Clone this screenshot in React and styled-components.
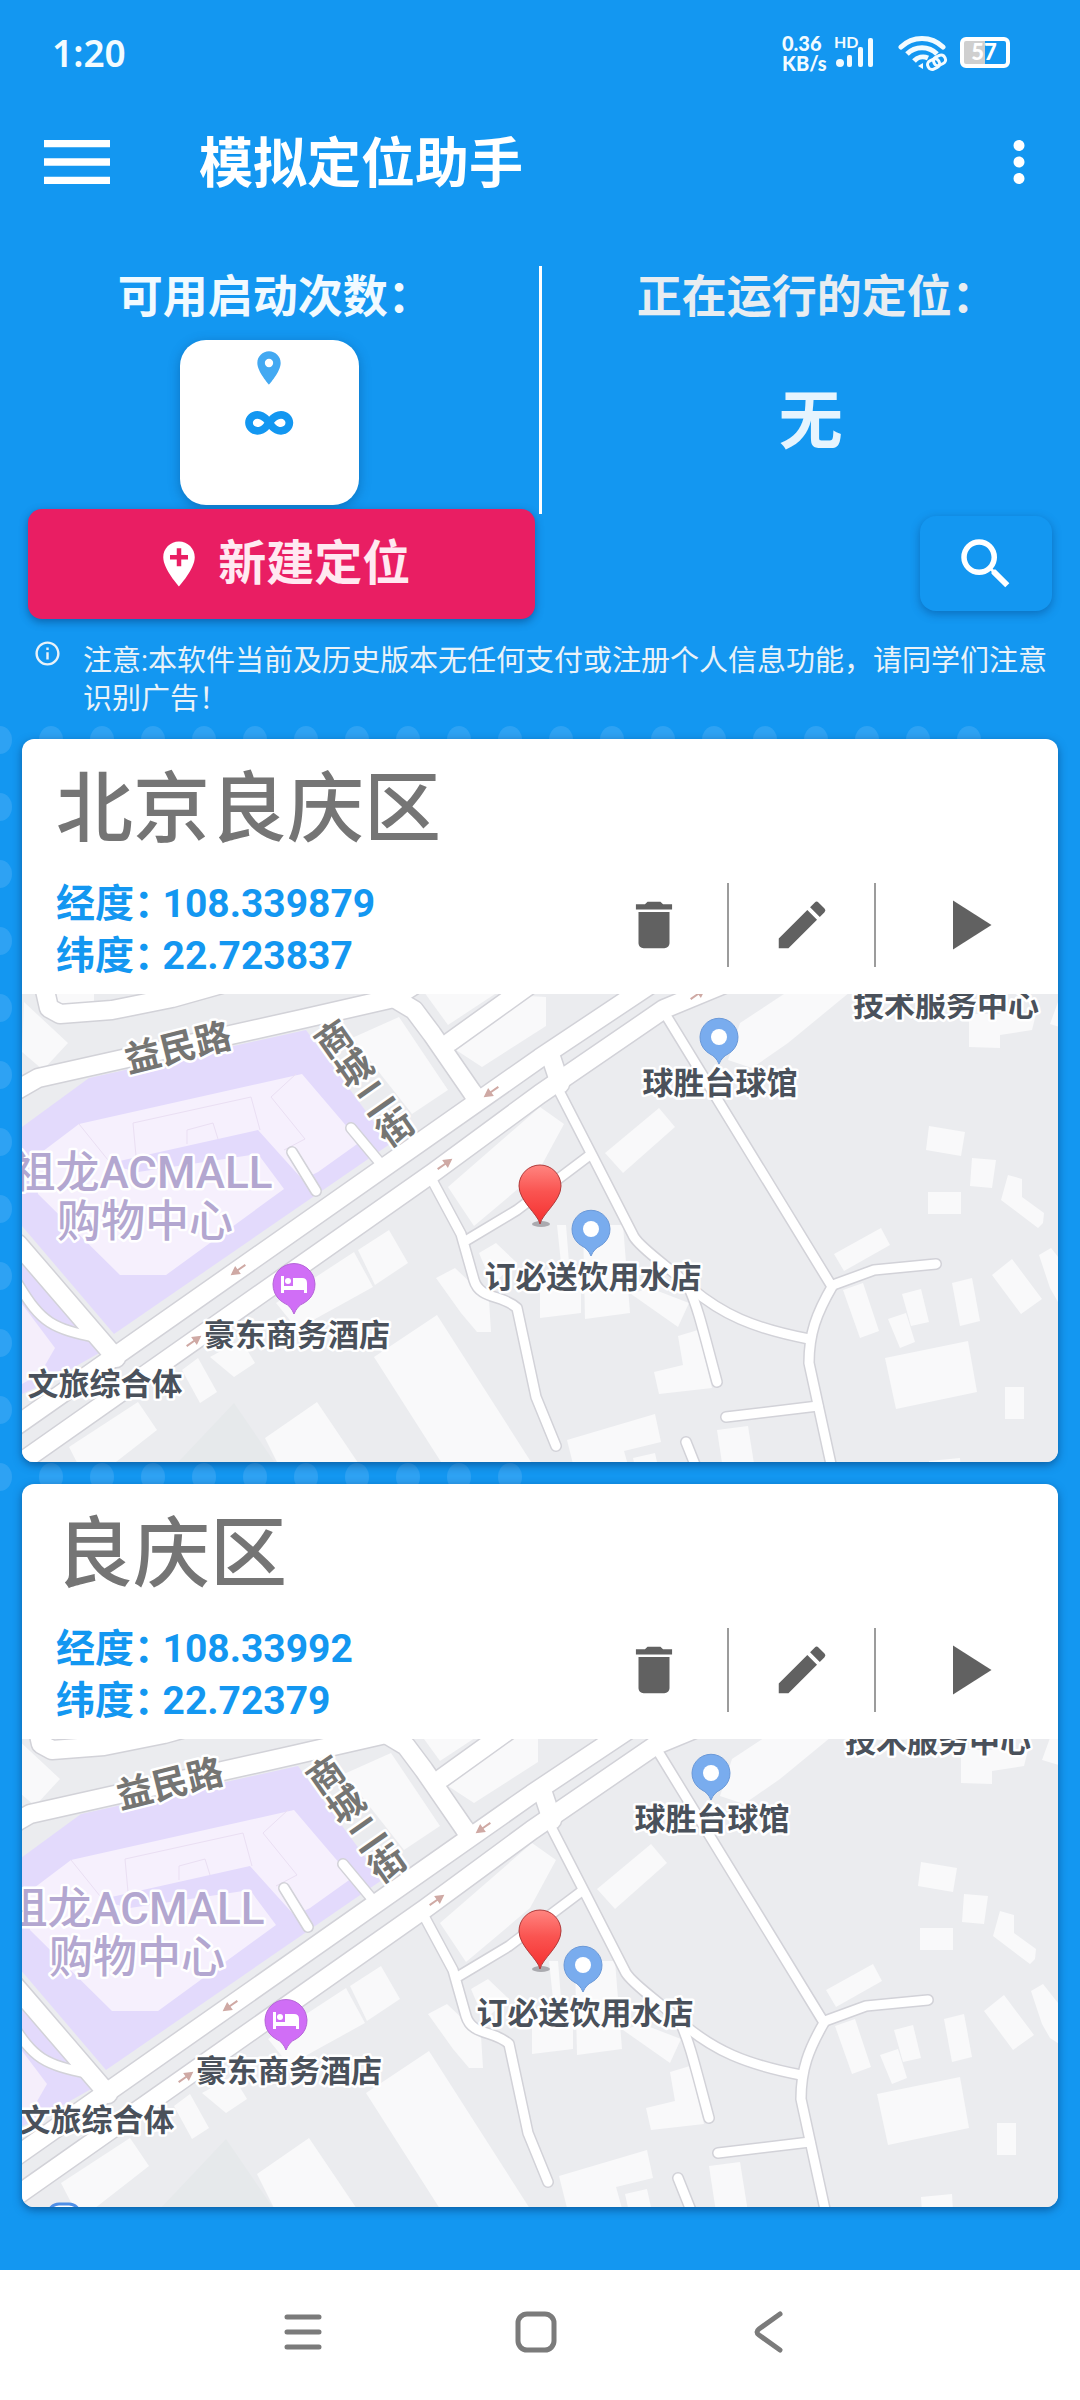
import React, { useId } from "react";
import styled, { createGlobalStyle } from "styled-components";
import {
  MdAddLocation,
  MdDelete,
  MdEdit,
  MdInfoOutline,
  MdLocationOn,
  MdMenu,
  MdMoreVert,
  MdPlayArrow,
  MdSearch,
} from "react-icons/md";

const GlobalStyle = createGlobalStyle`
  * {
    box-sizing: border-box;
  }
  body {
    margin: 0;
    background: #1397f1;
    font-family: Roboto, "Noto Sans CJK SC", sans-serif;
  }
  button {
    border: 0;
    padding: 0;
    background: none;
    font-family: inherit;
    color: inherit;
    cursor: pointer;
  }
  svg {
    display: block;
  }
`;

const Page = styled.div`
  min-height: 100vh;
  display: flex;
  flex-direction: column;
  background: #1397f1;
`;

/* status bar */
const StatusBar = styled.div`
  display: flex;
  align-items: center;
  justify-content: space-between;
  height: 106px;
  padding: 0 70px 0 52px;
  color: #f2fbff;
`;
const Clock = styled.time`
  font-family: "Noto Sans", sans-serif;
  font-size: 37px;
  font-weight: 600;
  line-height: 50px;
`;
const StatusIcons = styled.div`
  display: flex;
  align-items: center;
`;
const Speed = styled.div`
  display: flex;
  flex-direction: column;
  width: 52px;
  font-family: Lato, sans-serif;
  font-size: 20px;
  font-weight: 900;
  line-height: 20px;
`;

/* app bar */
const AppBar = styled.header`
  display: flex;
  align-items: center;
  height: 112px;
  padding: 0 28px 0 33px;
  color: #fff;
`;
const AppTitle = styled.h1`
  flex: 1;
  margin: 6px 0 0 78px;
  font-size: 54px;
  font-weight: 700;
  line-height: 72px;
`;

/* summary */
const Summary = styled.section`
  display: grid;
  grid-template-columns: 1fr 3px 1fr;
  padding-top: 48px;
`;
const Column = styled.div`
  display: flex;
  flex-direction: column;
  align-items: center;
`;
const Divider = styled.div`
  height: 248px;
  background: #fff;
`;
const Label = styled.h2`
  margin: 0;
  padding-left: 12px;
  font-size: 45px;
  font-weight: 700;
  line-height: 64px;
  color: ${(props) => (props.$muted ? "#e8edf1" : "#f1faff")};
`;
const Tile = styled.div`
  display: flex;
  flex-direction: column;
  align-items: center;
  width: 179px;
  height: 165px;
  margin: 10px 0 4px;
  padding-top: 8px;
  border-radius: 26px;
  background: #fff;
  color: #43a9f2;
  box-shadow: 0 3px 12px rgba(0, 50, 100, 0.35);
`;
const Count = styled.span`
  font-family: Inter, sans-serif;
  font-size: 52px;
  font-weight: 800;
  line-height: 66px;
  color: #1397f1;
`;
const CreateButton = styled.button`
  display: flex;
  align-items: center;
  justify-content: center;
  gap: 12px;
  align-self: stretch;
  height: 110px;
  margin: 0 4px 0 28px;
  border-radius: 14px;
  background: #e91e63;
  box-shadow: 0 3px 9px rgba(0, 40, 90, 0.45);
  font-size: 48px;
  font-weight: 700;
  line-height: 64px;
  color: #ffe9f1;

  svg {
    color: #fff;
  }
`;
const Running = styled.div`
  height: 186px;
  font-size: 64px;
  font-weight: 700;
  line-height: 184px;
  color: #e6f4fe;
`;
const SearchButton = styled.button`
  display: flex;
  align-items: center;
  justify-content: center;
  align-self: flex-end;
  width: 132px;
  height: 95px;
  margin-right: 28px;
  border-radius: 16px;
  background: #1397f1;
  box-shadow: 0 3px 10px rgba(0, 50, 110, 0.4);
  color: #fff;
`;

const Notice = styled.section`
  display: flex;
  align-items: flex-start;
  gap: 21px;
  padding: 23px 28px 21px 33px;
  color: #e9f2f8;

  svg {
    flex: none;
    margin-top: -3px;
  }
`;
const NoticeText = styled.p`
  margin: 0;
  font-size: 29px;
  line-height: 38px;
`;

/* location list */
const ListArea = styled.main`
  position: relative;
  flex: 1;
`;
const DotsSvg = styled.svg`
  position: absolute;
  top: -16px;
  left: 0;
`;
const List = styled.ul`
  position: relative;
  display: flex;
  flex-direction: column;
  gap: 22px;
  margin: 0;
  padding: 0 22px 62px;
  list-style: none;
`;
const Card = styled.li`
  overflow: hidden;
  border-radius: 12px;
  background: #fff;
  box-shadow: 0 3px 8px rgba(0, 40, 90, 0.5);
`;
const CardName = styled.h3`
  margin: 0;
  padding: 25px 34px 0;
  font-size: 77px;
  font-weight: 500;
  line-height: 92px;
  color: #757575;
`;
const CardRow = styled.div`
  display: flex;
  justify-content: space-between;
  padding: 22px 0 12px 34px;
`;
const Coordinates = styled.dl`
  margin: 0;
  color: #1397f1;
  font-weight: 700;
  line-height: 52px;
`;
const Coordinate = styled.div`
  display: flex;
  gap: 9px;

  dt {
    font-feature-settings: "halt";
  }
  dt,
  dd {
    margin: 0;
    font-size: 39px;
  }
`;
const Actions = styled.div`
  display: flex;
  height: 84px;
  margin-top: 5px;
`;
const ActionButton = styled.button`
  display: flex;
  align-items: center;
  justify-content: center;
  width: ${(props) => (props.$wide ? 184 : 147)}px;
  color: #616161;

  & + & {
    border-left: 2px solid #9c9c9c;
  }
`;
const MapSvg = styled.svg`
  width: 100%;
  height: auto;
  background: #ebecef;
`;
const PlaceLabel = styled.text`
  font-size: 31px;
  font-weight: 700;
  text-anchor: middle;
  fill: #4a515b;
  stroke: #fff;
  stroke-width: 5px;
  stroke-linejoin: round;
  paint-order: stroke;
`;
const RoadLabel = styled(PlaceLabel)`
  font-size: 36px;
  fill: #757573;
  writing-mode: ${(props) => (props.$vertical ? "vertical-rl" : "horizontal-tb")};
`;
const MallLabel = styled(PlaceLabel)`
  font-size: 44px;
  font-weight: 500;
  fill: #b3a7d0;
`;

/* system navigation */
const NavBar = styled.nav`
  display: flex;
  justify-content: center;
  height: 130px;
  padding: 0 8px 6px 0;
  background: #fff;
`;
const NavButton = styled.button`
  display: flex;
  align-items: center;
  justify-content: center;
  width: 233px;
`;

const places = [
  { name: "北京良庆区", lng: "108.339879", lat: "22.723837", shift: [0, 0] },
  { name: "良庆区", lng: "108.33992", lat: "22.72379", shift: [-8, -9] },
];

const wideRoads = [
  "M-12 100 L16 84 L150 54 L280 25 L372 4 L400 -14",
  "M372 4 L392 16 L410 40 L450 98 L456 106",
  "M-12 436 L518 64 L626 -8",
  "M-12 476 L412 178 L518 100 L642 15 L712 -14",
  "M528 60 L538 90",
  "M-4 250 L94 364",
  "M22 -8 L27 14 L38 20 L90 16 L150 4 L200 -10",
  "M428 48 L506 -8",
];

const narrowRoads = [
  "M329 134 L364 176",
  "M270 158 L294 197",
  "M-4 290 C20 330 30 334 76 344",
  "M645 23 L809 291",
  "M914 270 L852 276 L811 291",
  "M811 291 C794 320 787 340 787 369 L812 484",
  "M535 93 L570 161 L612 243 C620 256 650 275 669 294 C700 320 730 334 787 345",
  "M667 294 C676 314 680 332 695 388",
  "M704 423 L796 412",
  "M664 448 L680 488",
  "M410 186 L439 240 L452 286 C458 306 480 300 495 314 L514 403 L534 452",
  "M445 246 L495 216 L568 161",
];

const buildings = [
  "2,8 46,49 21,76 0,58",
  "33,-4 72,-4 72,9 36,10",
  "377,23 426,96 390,120 330,44",
  "402,-2 426,31 476,-2",
  "434,56 460,73 524,32 524,3 506,2",
  "426,193 518,113 542,130 516,178 452,232",
  "336,256 367,236 386,269 353,291",
  "254,309 332,258 351,293 275,335",
  "352,363 415,321 518,482 428,482",
  "243,444 295,408 345,482 262,482",
  "47,453 116,408 135,436 76,482 62,482",
  "414,284 433,274 467,306 469,338 455,338 439,319",
  "188,363 219,346 233,369 212,383",
  "160,376 176,364 195,398 178,409",
  "457,259 474,249 495,269 470,290",
  "583,159 637,114 653,133 601,179",
  "718,29 765,-2 828,-2 766,49 730,74 706,66",
  "947,20 1014,20 1010,36 978,41 978,54 947,53",
  "1028,30 1036,8 1048,8 1048,36",
  "907,132 943,138 939,162 904,156",
  "950,164 974,166 970,194 948,192",
  "906,198 939,198 939,220 906,220",
  "986,181 1000,185 1000,203 1022,219 1021,229 1016,234 979,206",
  "812,260 859,234 868,251 822,277",
  "821,296 841,289 857,337 838,344",
  "880,300 899,295 907,328 889,332",
  "866,325 884,319 893,348 878,354",
  "930,289 950,284 958,327 938,332",
  "970,281 990,265 1020,305 999,320",
  "1017,261 1029,254 1048,278 1048,316 1036,308 1028,294",
  "863,364 946,347 955,398 874,415",
  "983,393 1002,393 1002,425 983,425",
  "656,342 676,336 690,394 637,400 632,378 661,371",
  "545,446 633,420 639,448 602,457 609,482 554,482",
  "611,464 633,459 638,482 615,482",
  "695,436 726,432 734,482 702,482",
  "518,280 559,280 559,319 518,324",
  "561,231 601,231 608,319 563,325",
  "535,231 544,231 547,269 539,269",
  "609,300 628,294 667,309 656,333",
  "907,467 938,464 939,482 908,482",
];

const arrows = [
  [216, 276, 145],
  [469, 98, 145],
  [172, 347, -35],
  [423, 170, -35],
  [676, 0, -35],
];

const PoiPin = ({ x, y }) => (
  <g transform={`translate(${x} ${y})`}>
    <path
      d="M0 27 C-2 22 -5 19 -9 17 A19 19 0 1 1 9 17 C5 19 2 22 0 27 Z"
      fill="#79acee"
      stroke="#6b99d8"
    />
    <circle r="8" fill="#fff" />
  </g>
);

const HotelPin = ({ x, y }) => (
  <g transform={`translate(${x} ${y})`}>
    <path
      d="M0 30 C-2 25 -5 21 -10 19 A21 21 0 1 1 10 19 C5 21 2 25 0 30 Z"
      fill="#d06ef6"
      stroke="#b565d8"
    />
    <path d="M-13 -8 h3 v10 h9 v-8 h9 q5 0 5 5 v10 h-3 v-3 h-20 v3 h-3 Z" fill="#fff" />
    <circle cx="-6" cy="-3" r="3" fill="#fff" />
  </g>
);

const PlaceMap = ({ name, shift }) => {
  const balloon = useId();
  return (
    <MapSvg viewBox="0 0 1036 468" role="img" aria-label={name}>
      <defs>
        <linearGradient id={balloon} x1="0" y1="0" x2="0" y2="1">
          <stop offset="0" stopColor="#ff8580" />
          <stop offset="0.45" stopColor="#fa5451" />
          <stop offset="1" stopColor="#f52f2f" />
        </linearGradient>
      </defs>
      <g transform={`translate(${shift[0]} ${shift[1]})`}>
        <path d="M143 482 L212 409 L262 482 Z" fill="#e6e9eb" />
        {buildings.map((points) => (
          <polygon key={points} points={points} fill="#f9f9fa" />
        ))}
        <path d="M0 133 L67 84 L284 36 L368 150 L92 340 L0 232 Z" fill="#e3dafc" />
        <path d="M0 262 L68 345 L86 354 L26 388 L0 400 Z" fill="#e3dafc" />
        <path d="M0 310 L33 354 L18 380 L0 390 Z" fill="#f5eefb" />
        <path
          d="M12 164 L57 130 L280 80 L338 148 L296 178 L262 195 L144 281 L98 281 L16 200 Z"
          fill="#f6f0fd"
        />
        <path d="M84 170 L236 136 L290 196 L262 195 L236 160 L116 178 Z" fill="#e3dafc" />
        <path
          d="M57 130 L86 166 M114 162 L111 129 L229 103 L238 136 M165 150 L165 136 L191 129 L196 145 M274 80 L249 103 L283 145 L262 156"
          fill="none"
          stroke="#eadff3"
          strokeWidth="1"
        />
        <g fill="none" strokeLinejoin="round">
          <g stroke="#d2d2d8" strokeLinecap="round">
            {wideRoads.map((d) => (
              <path key={d} d={d} strokeWidth="21" />
            ))}
            {narrowRoads.map((d) => (
              <path key={d} d={d} strokeWidth="12" />
            ))}
          </g>
          <g stroke="#fff" strokeLinecap="round">
            {wideRoads.map((d) => (
              <path key={d} d={d} strokeWidth="18" />
            ))}
            {narrowRoads.map((d) => (
              <path key={d} d={d} strokeWidth="9" />
            ))}
          </g>
        </g>
        {arrows.map(([x, y, angle]) => (
          <path
            key={`${x}-${y}`}
            transform={`translate(${x} ${y}) rotate(${angle})`}
            d="M-9 -1 H0 V-5 L9 0 L0 5 V1 H-9 Z"
            fill="#cfa9a4"
          />
        ))}
        <rect x="34" y="474" width="32" height="30" rx="11" fill="#fff" stroke="#4f8fe6" strokeWidth="3" />

        <RoadLabel transform="translate(159 66) rotate(-14)">益民路</RoadLabel>
        <RoadLabel $vertical transform="translate(339 91) rotate(-35)">
          商城二街
        </RoadLabel>
        <MallLabel x="120" y="194">祖龙ACMALL</MallLabel>
        <MallLabel x="123" y="243">购物中心</MallLabel>

        <PoiPin x={697} y={43} />
        <PoiPin x={569} y={235} />
        <HotelPin x={272} y={290} />
        <PlaceLabel x="698" y="100">球胜台球馆</PlaceLabel>
        <PlaceLabel x="571" y="294">订必送饮用水店</PlaceLabel>
        <PlaceLabel x="275" y="352">豪东商务酒店</PlaceLabel>
        <PlaceLabel x="83" y="401">文旅综合体</PlaceLabel>
        <PlaceLabel x="924" y="22">技术服务中心</PlaceLabel>
      </g>
      <ellipse cx="519" cy="230" rx="9" ry="3" fill="#8f8f94" opacity="0.7" />
      <path
        d="M518 230 C516 220 497 207 497 192 A21 21 0 0 1 539 192 C539 207 520 220 518 230 Z"
        fill={`url(#${balloon})`}
        stroke="#b03a3a"
        strokeWidth="1"
      />
    </MapSvg>
  );
};

const Dots = () => {
  const dots = [];
  for (let row = 0; row < 12; row++) {
    const last = row === 11 ? 10 : 19;
    for (let col = 0; col <= last; col++) {
      dots.push([col * 51, 17 + row * 67]);
    }
  }
  return (
    <DotsSvg width="984" height="780" aria-hidden="true">
      {dots.map(([x, y]) => (
        <ellipse key={`${x}-${y}`} cx={x} cy={y} rx="12" ry="14" fill="#2ea2f3" />
      ))}
    </DotsSvg>
  );
};

const PlaceCard = ({ place }) => (
  <Card>
    <CardName>{place.name}</CardName>
    <CardRow>
      <Coordinates>
        <Coordinate>
          <dt>经度：</dt>
          <dd>{place.lng}</dd>
        </Coordinate>
        <Coordinate>
          <dt>纬度：</dt>
          <dd>{place.lat}</dd>
        </Coordinate>
      </Coordinates>
      <Actions>
        <ActionButton aria-label="删除">
          <MdDelete size={62} />
        </ActionButton>
        <ActionButton aria-label="编辑">
          <MdEdit size={62} />
        </ActionButton>
        <ActionButton $wide aria-label="启动">
          <MdPlayArrow size={84} />
        </ActionButton>
      </Actions>
    </CardRow>
    <PlaceMap name={place.name} shift={place.shift} />
  </Card>
);

const App = () => {
  return (
    <Page>
      <GlobalStyle />
      <StatusBar>
        <Clock>1:20</Clock>
        <StatusIcons>
          <Speed>
            <span>0.36</span>
            <span>KB/s</span>
          </Speed>
          <svg width="64" height="44" viewBox="0 0 64 44" fill="currentColor">
            <text x="0" y="17" fontFamily="Lato" fontSize="16" fontWeight="700">
              HD
            </text>
            <circle cx="6" cy="32" r="4" />
            <rect x="13" y="24" width="5" height="12" rx="2" />
            <rect x="24" y="16" width="5" height="20" rx="2" />
            <rect x="34" y="7" width="5" height="29" rx="2" />
          </svg>
          <svg width="52" height="36" viewBox="0 0 52 36" fill="none" stroke="currentColor">
            <path d="M3 12 A30 30 0 0 1 45 12" strokeWidth="5" strokeLinecap="round" />
            <path d="M9 19 A21 21 0 0 1 39 19" strokeWidth="5" />
            <path d="M16 26 A12 12 0 0 1 30 23" strokeWidth="5" />
            <path d="M20 31 L25 28 V34 Z" fill="currentColor" stroke="none" />
            <g strokeWidth="3" transform="rotate(-25 39 27)">
              <rect x="29" y="23" width="12" height="9" rx="4" />
              <rect x="36" y="22" width="12" height="9" rx="4" />
            </g>
          </svg>
          <svg width="60" height="36" viewBox="0 0 60 36">
            <rect x="13" y="6" width="22" height="23" fill="#cfcfcf" />
            <rect x="12" y="4" width="46" height="27" rx="4" fill="none" stroke="#fff" strokeWidth="4" />
            <text
              x="34"
              y="25"
              fontFamily="Lato"
              fontSize="22"
              fontWeight="900"
              textAnchor="middle"
              fill="#fff"
            >
              57
            </text>
          </svg>
        </StatusIcons>
      </StatusBar>

      <AppBar>
        <button aria-label="菜单">
          <MdMenu size={88} />
        </button>
        <AppTitle>模拟定位助手</AppTitle>
        <button aria-label="更多">
          <MdMoreVert size={66} />
        </button>
      </AppBar>

      <Summary>
        <Column>
          <Label>可用启动次数：</Label>
          <Tile>
            <MdLocationOn size={40} />
            <Count>∞</Count>
          </Tile>
          <CreateButton>
            <MdAddLocation size={54} />
            新建定位
          </CreateButton>
        </Column>
        <Divider />
        <Column>
          <Label $muted>正在运行的定位：</Label>
          <Running>无</Running>
          <SearchButton aria-label="搜索">
            <MdSearch size={66} />
          </SearchButton>
        </Column>
      </Summary>

      <Notice>
        <MdInfoOutline size={29} />
        <NoticeText>
          注意:本软件当前及历史版本无任何支付或注册个人信息功能，请同学们注意识别广告！
        </NoticeText>
      </Notice>

      <ListArea>
        <Dots />
        <List>
          {places.map((place) => (
            <PlaceCard key={place.name} place={place} />
          ))}
        </List>
      </ListArea>

      <NavBar>
        <NavButton aria-label="最近任务">
          <svg width="40" height="42" stroke="#7b7b7b" strokeWidth="5" strokeLinecap="round">
            <path d="M4 6 H36 M4 21 H36 M4 36 H36" />
          </svg>
        </NavButton>
        <NavButton aria-label="主页">
          <svg width="42" height="42" fill="none" stroke="#7b7b7b" strokeWidth="5">
            <rect x="3" y="3" width="36" height="36" rx="9" />
          </svg>
        </NavButton>
        <NavButton aria-label="返回">
          <svg width="32" height="42" fill="none" stroke="#7b7b7b" strokeWidth="5" strokeLinecap="round">
            <path d="M27 3 L6 18 Q2 21 6 24 L27 39" />
          </svg>
        </NavButton>
      </NavBar>
    </Page>
  );
};

export default App;
